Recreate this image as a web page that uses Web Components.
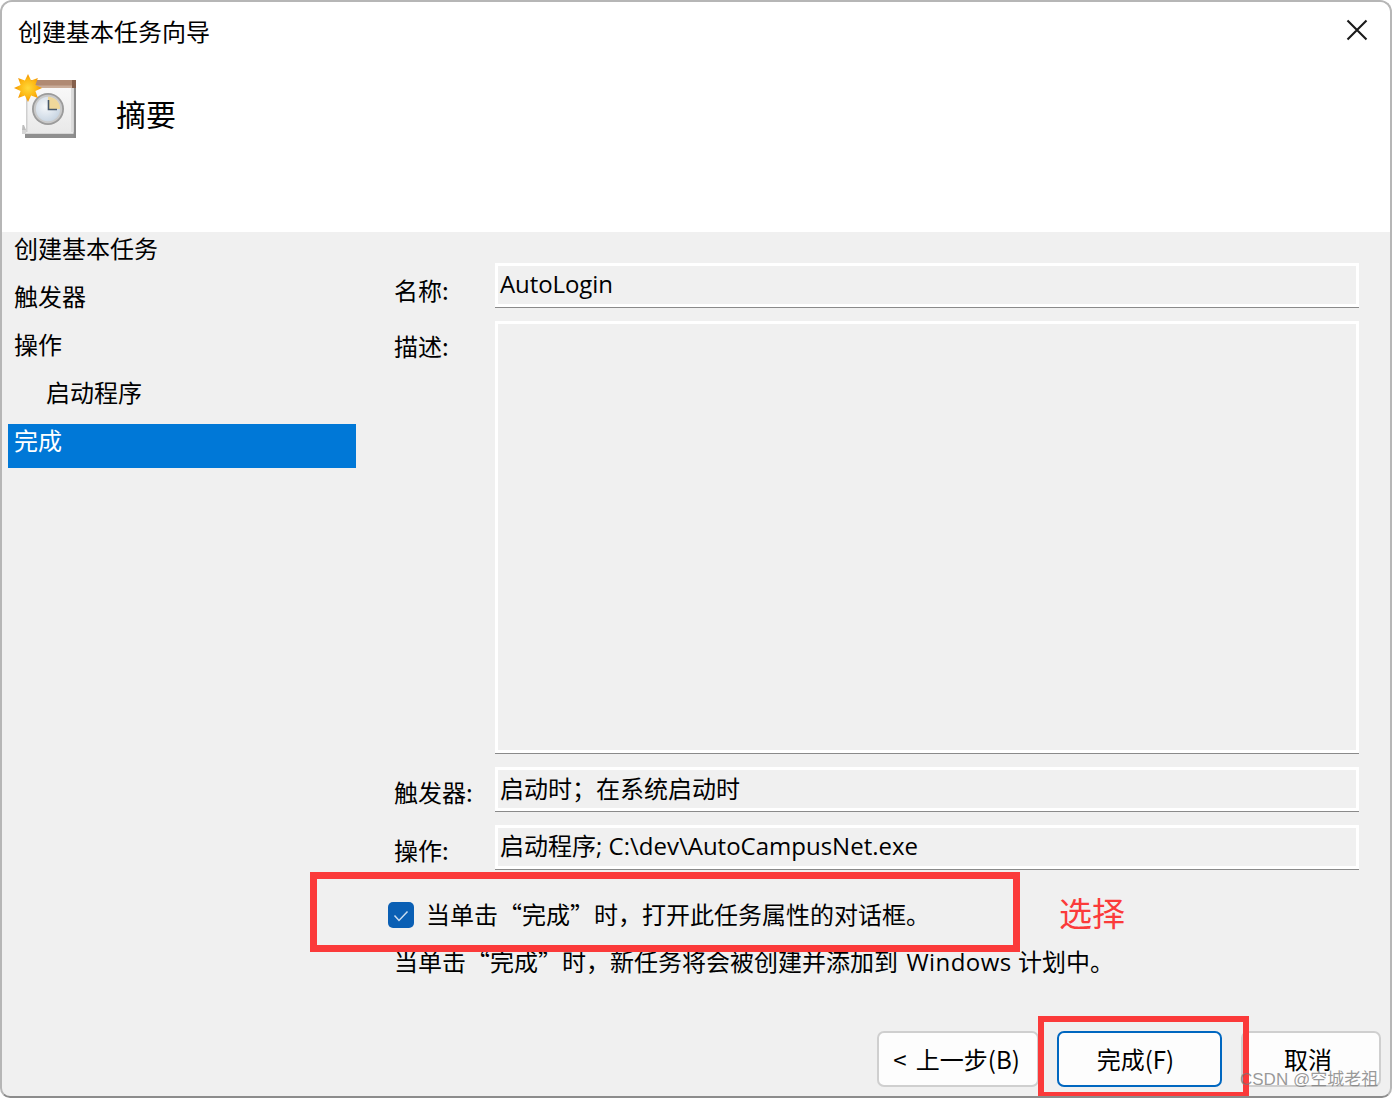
<!DOCTYPE html>
<html lang="zh-CN">
<head>
<meta charset="utf-8">
<title>创建基本任务向导</title>
<style>
html,body{margin:0;padding:0;background:#fff}
body{font-family:"Noto Sans CJK SC","Noto Sans",sans-serif;font-size:24px;color:#000}
.lat{font-family:"Open Sans","Noto Sans CJK SC",sans-serif}
</style>
</head>
<body>
<wizard-window>
  <title-bar slot="title">创建基本任务向导</title-bar>
  <wizard-header slot="header">摘要</wizard-header>
  <wizard-nav slot="nav">
    <nav-item>创建基本任务</nav-item>
    <nav-item>触发器</nav-item>
    <nav-item>操作</nav-item>
    <nav-item sub>启动程序</nav-item>
    <nav-item selected>完成</nav-item>
  </wizard-nav>
  <summary-form slot="main">
    <wizard-field label="名称:" label-offset="10" gap="13" text-top="-2"><span class="lat" style="letter-spacing:-.1px">AutoLogin</span></wizard-field>
    <wizard-field label="描述:" label-offset="8" height="433" gap="13"></wizard-field>
    <wizard-field label="触发器:" label-offset="8" gap="13">启动时；在系统启动时</wizard-field>
    <wizard-field label="操作:" label-offset="8" text-top="-2"><span class="lat">启动程序; C:\dev\AutoCampusNet.exe</span></wizard-field>
  </summary-form>
  <wizard-check slot="main">当单击“完成”时，打开此任务属性的对话框。</wizard-check>
  <wizard-note slot="main">当单击“完成”时，新任务将会被创建并添加到 <span class="lat" style="letter-spacing:.45px;margin:0 1px 0 3px">Windows</span> 计划中。</wizard-note>
  <button-bar slot="main">
    <wizard-button width="162" shift="3" style="word-spacing:4px">&lt; 上一步(B)</wizard-button>
    <wizard-button width="165" shift="8" default>完成(F)</wizard-button>
    <wizard-button width="140" shift="6" style="margin-left:19px">取消</wizard-button>
  </button-bar>
  <red-box slot="overlay" style="left:310px;top:872px;width:696px;height:66px"></red-box>
  <red-box slot="overlay" thin style="left:1038px;top:1016px;width:199px;height:70px"></red-box>
  <anno-text slot="overlay" style="left:1059px;top:888px">选择</anno-text>
  <water-mark slot="overlay" style="left:1240px;top:1067px">CSDN @空城老祖</water-mark>
</wizard-window>

<script>
function def(name, css, html, init){
  customElements.define(name, class extends HTMLElement{
    constructor(){
      super();
      const r=this.attachShadow({mode:'open'});
      r.innerHTML='<style>'+css+'</style>'+html;
    }
    connectedCallback(){ if(init) init(this, this.shadowRoot); }
  });
}
def('wizard-window',`
  :host{display:block;position:relative;width:1392px;height:1098px;box-sizing:border-box;overflow:hidden;background:#f0f0f0;
    border:2px solid #b6b6b6;border-bottom-color:#8c8c8c;border-radius:12px 12px 10px 10px}
  .top{background:#fff;height:230px;display:flex;flex-direction:column}
  .body{display:flex;height:864px}
  .nav{width:354px;flex:none}
  .main{flex:1;min-width:0;padding-left:38px;box-sizing:border-box}
  .over{position:absolute;left:-2px;top:-2px}
`,`<div class="top"><slot name="title"></slot><slot name="header"></slot></div>
<div class="body"><div class="nav"><slot name="nav"></slot></div><div class="main"><slot name="main"></slot></div></div>
<div class="over"><slot name="overlay"></slot></div>`);

def('title-bar',`
  :host{display:flex;align-items:flex-start;justify-content:space-between;height:60px;padding:0 22px 0 16px;font-size:24px;line-height:58px;color:#000}
  svg{display:block;margin-top:17px}
`,`<span><slot></slot></span>
<svg width="22" height="22" viewBox="0 0 22 22"><path d="M1.5 1.5 20.5 20.5M20.5 1.5 1.5 20.5" fill="none" stroke="#1a1a1a" stroke-width="2.1"/></svg>`);

def('wizard-header',`
  :host{display:flex;align-items:flex-start;gap:38px;height:170px;padding:14px 0 0 10px;box-sizing:border-box}
  svg{display:block;flex:none;overflow:visible}
  .t{font-size:30px;line-height:44px;margin-top:15px}
`,`<svg width="66" height="64" viewBox="0 0 66 64">
  <defs>
    <radialGradient id="sun" cx=".5" cy=".5" r=".55"><stop offset="0" stop-color="#ffd93a"/><stop offset=".55" stop-color="#fdb813"/><stop offset="1" stop-color="#f08a00"/></radialGradient>
    <linearGradient id="pg" x1="0" y1="0" x2="0" y2="1"><stop offset="0" stop-color="#fbfbfb"/><stop offset="1" stop-color="#e9e9e9"/></linearGradient>
    <radialGradient id="face" cx=".4" cy=".4" r=".7"><stop offset="0" stop-color="#f6f8fb"/><stop offset="1" stop-color="#c4d2e0"/></radialGradient>
  </defs>
  <path d="M13 57h51v5H13z" fill="#8f8f8f"/>
  <path d="M10 53.5h54V58H10z" fill="#d6d6d6"/>
  <path d="M12 49H10.5L10 54h4z" fill="#bdbdbd"/>
  <rect x="14" y="4" width="50" height="53" fill="url(#pg)"/>
  <rect x="61.6" y="8" width="2.4" height="54" fill="#8a8a8a"/>
  <rect x="59" y="12" width="2.6" height="44" fill="#dcdcdc"/>
  <rect x="14" y="12" width="1.5" height="44" fill="#cfcfcf"/>
  <rect x="16" y="4" width="48" height="8" fill="#b08a73"/>
  <rect x="16" y="9.5" width="48" height="2.5" fill="#c9ac99"/>
  <rect x="60" y="4" width="4" height="8" fill="#85604c"/>
  <circle cx="36" cy="33" r="16" fill="#9b9b9b"/>
  <circle cx="36" cy="33" r="14.2" fill="#c9c9c9"/>
  <circle cx="36" cy="33" r="12.2" fill="url(#face)"/>
  <path d="M36 33V20.8A12.2 12.2 0 0 1 48.2 33z" fill="#efd79a"/>
  <path d="M36.5 24v9.5H45" fill="none" stroke="#47586b" stroke-width="1.6"/>
  <path d="M30 12 23.4 15.1 25.9 21.9 19.1 19.4 16 26 12.9 19.4 6.1 21.9 8.6 15.1 2 12 8.6 8.9 6.1 2.1 12.9 4.6 16 -2 19.1 4.6 25.9 2.1 23.4 8.9z" fill="url(#sun)"/>
</svg><span class="t"><slot></slot></span>`);

def('wizard-nav',`:host{display:flex;flex-direction:column;gap:4px;padding-left:6px}`,`<slot></slot>`);
def('nav-item',`
  :host{display:block;height:44px;line-height:32px;padding-left:6px;font-size:24px;color:#000}
  :host([sub]){padding-left:38px}
  :host([selected]){background:#0078d7;color:#fff}
`,`<slot></slot>`);

def('summary-form',`:host{display:block;padding-top:31px;width:965px}`,`<slot></slot>`);
def('wizard-field',`
  :host{display:grid;grid-template-columns:101px 864px}
  .l{line-height:34px}
  .f{box-sizing:border-box;border:3px solid #fff;border-bottom-width:4px;background:#f0f0f0;padding:0 0 0 2px;line-height:38px;position:relative}
  .f::after{content:"";position:absolute;left:-3px;right:-3px;bottom:-4px;height:1px;background:#8a8a8a}
  .t{display:block}
`,`<div class="l"></div><div class="f"><span class="t"><slot></slot></span></div>`,
(el,r)=>{
  r.querySelector('.l').textContent=el.getAttribute('label');
  r.querySelector('.l').style.paddingTop=(el.getAttribute('label-offset')||0)+'px';
  r.querySelector('.f').style.height=(el.getAttribute('height')||45)+'px';
  r.querySelector('.t').style.marginTop=(el.getAttribute('text-top')||-1)+'px';
  el.style.marginBottom=(el.getAttribute('gap')||0)+'px';
});

def('wizard-check',`
  :host{display:flex;align-items:center;gap:12px;height:34px;margin:28px 0 0 -6px;line-height:32px}
  .b{width:26px;height:26px;border-radius:5px;background:#0a5fb4;display:block;flex:none}
  span{margin-top:-2px}
`,`<svg class="b" viewBox="0 0 26 26"><path d="M6.5 13.5 11 18.5 19.5 9.5" fill="none" stroke="#c9dcf0" stroke-width="1.5"/></svg><span><slot></slot></span>`);

def('wizard-note',`:host{display:block;height:34px;line-height:32px;margin-top:13px;white-space:nowrap}`,`<slot></slot>`);

def('button-bar',`:host{display:flex;justify-content:flex-end;align-items:center;margin-top:52px;padding-right:9px}`,`<slot></slot>`);
def('wizard-button',`
  :host{display:flex;align-items:center;justify-content:center;box-sizing:border-box;height:56px;border:2px solid #cfcfcf;border-radius:7px;background:#fdfdfd;font-size:24px;line-height:32px;margin-left:18px;white-space:nowrap}
  :host([default]){border-color:#0067c0}
  span{margin-top:-1px}
`,`<span><slot></slot></span>`,(el)=>{el.style.width=el.getAttribute('width')+'px';el.style.paddingRight=(el.getAttribute('shift')||0)+'px'});

def('red-box',`
  :host{display:block;position:absolute;border:7px solid #fb3a3a}
  :host([thin]){border-width:6px}
`,``);
def('anno-text',`:host{display:block;position:absolute;font-size:33px;line-height:48px;color:#fb3a3a;white-space:nowrap}`,`<slot></slot>`);
def('water-mark',`:host{display:block;position:absolute;font-size:17px;line-height:26px;color:rgba(120,120,120,.75);white-space:nowrap;font-family:"Liberation Sans","Noto Sans CJK SC",sans-serif}`,`<slot></slot>`);
</script>
</body>
</html>
